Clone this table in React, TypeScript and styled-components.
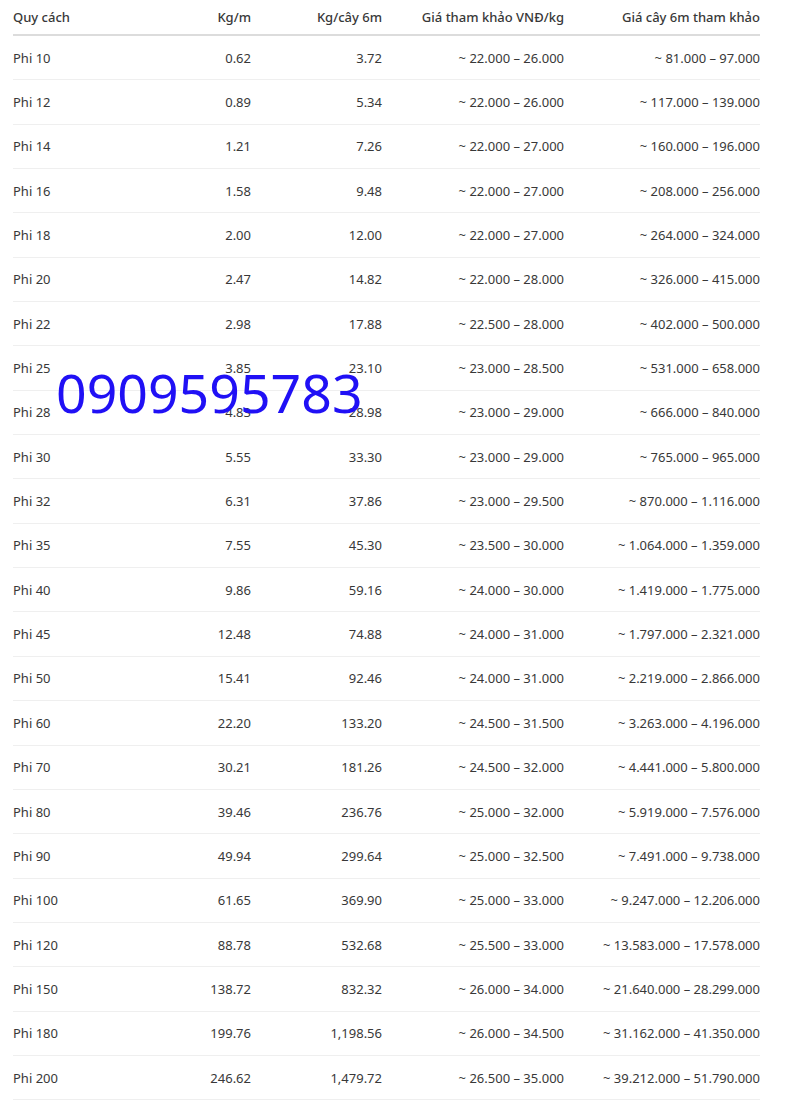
import React from "react";
import styled, { createGlobalStyle } from "styled-components";

const GlobalStyle = createGlobalStyle`
  html, body {
    margin: 0;
    padding: 0;
    background: #ffffff;
  }
  body {
    font-family: "Noto Sans", "Open Sans", sans-serif;
    color: #383838;
  }
`;

const Page = styled.div`
  position: relative;
  padding: 0 0 0 13px;
  width: 747px;
`;

const Row = styled.div<{ $head?: boolean }>`
  display: grid;
  grid-template-columns: 158px 80px 131px 182px 196px;
  align-items: center;
  box-sizing: border-box;
  height: ${(p) => (p.$head ? "36px" : "44.35px")};
  border-bottom: ${(p) => (p.$head ? "2px solid #dcdcdc" : "1px solid #efefef")};
  font-size: 13px;
  font-weight: ${(p) => (p.$head ? 500 : 400)};
  white-space: nowrap;
`;

const Cell = styled.div<{ $left?: boolean }>`
  text-align: ${(p) => (p.$left ? "left" : "right")};
`;

const Phone = styled.div`
  position: absolute;
  left: 56px;
  top: 366px;
  font-size: 53.6px;
  line-height: 1;
  color: #2010f5;
  font-family: "Noto Sans", sans-serif;
`;

const rows: [string, string, string, string, string][] = [
  ["Phi 10", "0.62", "3.72", "~ 22.000 – 26.000", "~ 81.000 – 97.000"],
  ["Phi 12", "0.89", "5.34", "~ 22.000 – 26.000", "~ 117.000 – 139.000"],
  ["Phi 14", "1.21", "7.26", "~ 22.000 – 27.000", "~ 160.000 – 196.000"],
  ["Phi 16", "1.58", "9.48", "~ 22.000 – 27.000", "~ 208.000 – 256.000"],
  ["Phi 18", "2.00", "12.00", "~ 22.000 – 27.000", "~ 264.000 – 324.000"],
  ["Phi 20", "2.47", "14.82", "~ 22.000 – 28.000", "~ 326.000 – 415.000"],
  ["Phi 22", "2.98", "17.88", "~ 22.500 – 28.000", "~ 402.000 – 500.000"],
  ["Phi 25", "3.85", "23.10", "~ 23.000 – 28.500", "~ 531.000 – 658.000"],
  ["Phi 28", "4.83", "28.98", "~ 23.000 – 29.000", "~ 666.000 – 840.000"],
  ["Phi 30", "5.55", "33.30", "~ 23.000 – 29.000", "~ 765.000 – 965.000"],
  ["Phi 32", "6.31", "37.86", "~ 23.000 – 29.500", "~ 870.000 – 1.116.000"],
  ["Phi 35", "7.55", "45.30", "~ 23.500 – 30.000", "~ 1.064.000 – 1.359.000"],
  ["Phi 40", "9.86", "59.16", "~ 24.000 – 30.000", "~ 1.419.000 – 1.775.000"],
  ["Phi 45", "12.48", "74.88", "~ 24.000 – 31.000", "~ 1.797.000 – 2.321.000"],
  ["Phi 50", "15.41", "92.46", "~ 24.000 – 31.000", "~ 2.219.000 – 2.866.000"],
  ["Phi 60", "22.20", "133.20", "~ 24.500 – 31.500", "~ 3.263.000 – 4.196.000"],
  ["Phi 70", "30.21", "181.26", "~ 24.500 – 32.000", "~ 4.441.000 – 5.800.000"],
  ["Phi 80", "39.46", "236.76", "~ 25.000 – 32.000", "~ 5.919.000 – 7.576.000"],
  ["Phi 90", "49.94", "299.64", "~ 25.000 – 32.500", "~ 7.491.000 – 9.738.000"],
  ["Phi 100", "61.65", "369.90", "~ 25.000 – 33.000", "~ 9.247.000 – 12.206.000"],
  ["Phi 120", "88.78", "532.68", "~ 25.500 – 33.000", "~ 13.583.000 – 17.578.000"],
  ["Phi 150", "138.72", "832.32", "~ 26.000 – 34.000", "~ 21.640.000 – 28.299.000"],
  ["Phi 180", "199.76", "1,198.56", "~ 26.000 – 34.500", "~ 31.162.000 – 41.350.000"],
  ["Phi 200", "246.62", "1,479.72", "~ 26.500 – 35.000", "~ 39.212.000 – 51.790.000"],
];

export default function App() {
  return (
    <>
      <GlobalStyle />
      <Page>
        <Row $head>
          <Cell $left>Quy cách</Cell>
          <Cell>Kg/m</Cell>
          <Cell>Kg/cây 6m</Cell>
          <Cell>Giá tham khảo VNĐ/kg</Cell>
          <Cell>Giá cây 6m tham khảo</Cell>
        </Row>
        {rows.map((r) => (
          <Row key={r[0]}>
            <Cell $left>{r[0]}</Cell>
            <Cell>{r[1]}</Cell>
            <Cell>{r[2]}</Cell>
            <Cell>{r[3]}</Cell>
            <Cell>{r[4]}</Cell>
          </Row>
        ))}
        <Phone>0909595783</Phone>
      </Page>
    </>
  );
}
